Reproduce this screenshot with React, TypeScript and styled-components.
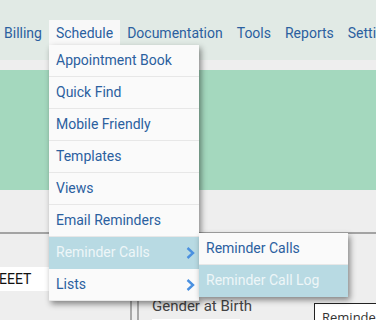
import styled, { createGlobalStyle } from 'styled-components';

const GlobalStyle = createGlobalStyle`
  html, body {
    margin: 0;
    padding: 0;
    background: #eeeeee;
    font-family: Roboto, "Liberation Sans", sans-serif;
    overflow: hidden;
  }
`;

const Page = styled.div`
  position: relative;
  width: 376px;
  height: 320px;
  overflow: hidden;
  background: #eeeeee;
`;

const TopBar = styled.div`
  height: 60px;
  background: #e1eae5;
  display: flex;
  align-items: flex-start;
  padding-top: 20px;
  box-sizing: border-box;
`;

const NavList = styled.div`
  display: flex;
  margin-left: -3px;
  white-space: nowrap;
`;

const NavItem = styled.div<{ $open?: boolean }>`
  height: 24px;
  padding: 1px 7px 0;
  line-height: 25px;
  font-size: 14px;
  color: #2b609f;
  background: ${({ $open }) => ($open ? '#f8f8f8' : 'transparent')};
`;

const Banner = styled.div`
  margin-top: 10px;
  height: 120px;
  background: #a4d8be;
`;

const FormArea = styled.div`
  margin-top: 42px;
  border-top: 2px solid #a3a3a3;
  display: flex;
  height: 100px;
`;

const LeftCol = styled.div`
  width: 132px;
  padding-top: 33px;
  border-right: 2px solid #a8a8a8;
  box-sizing: border-box;
`;

const TextBox = styled.div`
  width: 49px;
  height: 24px;
  line-height: 24px;
  background: #ffffff;
  font-size: 14px;
  color: #111111;
  overflow: hidden;
  text-indent: -1px;
`;

const RightCol = styled.div`
  flex: 1;
  margin-left: 5px;
  border-left: 2px solid #a8a8a8;
  padding: 63px 0 0 13px;
`;

const FieldLabel = styled.div`
  font-size: 15px;
  color: #444444;
  line-height: 18px;
`;

const FieldInput = styled.div`
  margin-top: 4px;
  width: 88px;
  height: 22px;
  background: #ffffff;
`;

const Menu = styled.div`
  position: absolute;
  top: 45px;
  left: 49px;
  width: 150px;
  background: #fafafa;
  box-shadow: 2px 3px 6px rgba(0, 0, 0, 0.45);
`;

const SubMenu = styled(Menu)`
  top: 188px;
  left: 150px;
  width: 149px;
`;

const MenuItem = styled.div<{ $active?: boolean }>`
  position: relative;
  height: 31px;
  line-height: 31px;
  padding-left: 7px;
  font-size: 14px;
  color: ${({ $active }) => ($active ? '#eef6f8' : '#2b609f')};
  background: ${({ $active }) => ($active ? '#b8dae3' : 'transparent')};
  border-bottom: 1px solid ${({ $active }) => ($active ? '#b8dae3' : '#e7e7e7')};
  white-space: nowrap;

  &:last-child {
    border-bottom: none;
    height: 32px;
  }
`;

const Chevron = styled.svg`
  position: absolute;
  right: 4px;
  top: 10px;
  width: 9px;
  height: 12px;
`;

const Tooltip = styled.div`
  position: absolute;
  left: 314px;
  top: 303px;
  padding: 4px 7px;
  background: #ffffff;
  border: 1px solid #222222;
  font-family: "Open Sans", "Liberation Sans", sans-serif;
  font-size: 13px;
  color: #333333;
  white-space: nowrap;
`;

const Arrow = () => (
  <Chevron viewBox="0 0 9 12">
    <path d="M1.5 1 L7 6 L1.5 11" fill="none" stroke="#4a90e0" strokeWidth="2.4" />
  </Chevron>
);

const navItems = ['Billing', 'Schedule', 'Documentation', 'Tools', 'Reports', 'Settings'];

const scheduleItems = [
  { label: 'Appointment Book' },
  { label: 'Quick Find' },
  { label: 'Mobile Friendly' },
  { label: 'Templates' },
  { label: 'Views' },
  { label: 'Email Reminders' },
  { label: 'Reminder Calls', sub: true, active: true },
  { label: 'Lists', sub: true },
];

export default function App() {
  return (
    <Page>
      <GlobalStyle />
      <TopBar>
        <NavList>
          {navItems.map((n) => (
            <NavItem key={n} $open={n === 'Schedule'}>
              {n}
            </NavItem>
          ))}
        </NavList>
      </TopBar>
      <Banner />
      <FormArea>
        <LeftCol>
          <TextBox>EEET</TextBox>
        </LeftCol>
        <RightCol>
          <FieldLabel>Gender at Birth</FieldLabel>
          <FieldInput />
        </RightCol>
      </FormArea>

      <Tooltip>Reminder Calls</Tooltip>

      <Menu>
        {scheduleItems.map((item) => (
          <MenuItem key={item.label} $active={item.active}>
            {item.label}
            {item.sub && <Arrow />}
          </MenuItem>
        ))}
        <SubMenu>
          <MenuItem>Reminder Calls</MenuItem>
          <MenuItem $active>Reminder Call Log</MenuItem>
        </SubMenu>
      </Menu>
    </Page>
  );
}
